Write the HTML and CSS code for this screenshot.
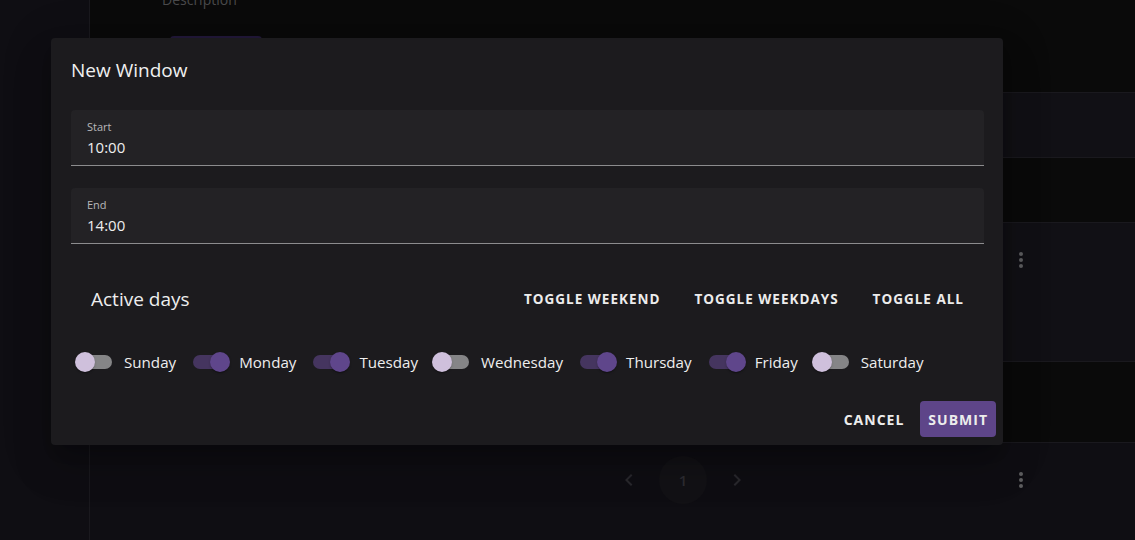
FILE: index.html
```html
<!DOCTYPE html>
<html lang="en">

<head>
    <meta charset="UTF-8">
    <meta name="viewport" content="width=device-width, initial-scale=1.0">
    <title>New Window</title>
    <link rel="stylesheet" href="styles.css">
</head>

<body>
    <div class="page">
        <div class="sidebar"></div>
        <div class="main">
            <div class="head">
                <div class="head-label">Description</div>
                <div class="head-btn"></div>
            </div>
            <div class="row row-light"></div>
            <div class="row row-dark"></div>
            <div class="row row-light row-tall">
                <div class="kebab"><i></i><i></i><i></i></div>
            </div>
            <div class="row row-dark row-mid"></div>
            <div class="row footer">
                <div class="pager">
                    <svg class="chev" viewBox="0 0 24 24"><path d="M15.41 7.41 14 6l-6 6 6 6 1.41-1.41L10.83 12z"/></svg>
                    <span class="page-num">1</span>
                    <svg class="chev" viewBox="0 0 24 24"><path d="M10 6 8.59 7.41 13.17 12l-4.58 4.59L10 18l6-6z"/></svg>
                </div>
                <div class="kebab"><i></i><i></i><i></i></div>
            </div>
        </div>
    </div>

    <div class="dialog">
        <div class="dialog-body">
            <h2 class="dialog-title">New Window</h2>

            <div class="field">
                <label class="field-label">Start</label>
                <div class="field-value">10:00</div>
            </div>
            <div class="field">
                <label class="field-label">End</label>
                <div class="field-value">14:00</div>
            </div>

            <div class="days-head">
                <span class="days-title">Active days</span>
                <div class="days-tools">
                    <button class="text-btn">Toggle weekend</button>
                    <button class="text-btn">Toggle weekdays</button>
                    <button class="text-btn">Toggle all</button>
                </div>
            </div>

            <div class="days">
                <label class="day"><span class="switch"><span class="track"></span><span class="thumb"></span></span>Sunday</label>
                <label class="day on"><span class="switch"><span class="track"></span><span class="thumb"></span></span>Monday</label>
                <label class="day on"><span class="switch"><span class="track"></span><span class="thumb"></span></span>Tuesday</label>
                <label class="day"><span class="switch"><span class="track"></span><span class="thumb"></span></span>Wednesday</label>
                <label class="day on"><span class="switch"><span class="track"></span><span class="thumb"></span></span>Thursday</label>
                <label class="day on"><span class="switch"><span class="track"></span><span class="thumb"></span></span>Friday</label>
                <label class="day"><span class="switch"><span class="track"></span><span class="thumb"></span></span>Saturday</label>
            </div>
        </div>
        <div class="dialog-actions">
            <button class="text-btn">Cancel</button>
            <button class="text-btn primary">Submit</button>
        </div>
    </div>
</body>

</html>
```

FILE: styles.css
```css
body {
    margin: 0;
    background-color: #0f0e13;
    font-family: 'Open Sans', 'Noto Sans', sans-serif;
    color: #ececec;
    overflow: hidden;
}

.page {
    display: flex;
    height: 540px;
}

.sidebar {
    width: 89px;
    border-right: 1px solid #1a191e;
    flex-shrink: 0;
}

.main {
    flex: 1;
    display: flex;
    flex-direction: column;
}

.head {
    height: 92px;
    background-color: #0a0a0a;
    padding-left: 72px;
    overflow: hidden;
}

.head-label {
    margin-top: -10px;
    font-size: 14px;
    line-height: 20px;
    color: #4a4a4c;
}

.head-btn {
    margin-top: 26px;
    margin-left: 8px;
    width: 92px;
    height: 36px;
    border-radius: 4px;
    background-color: #22193a;
}

.row {
    border-top: 1px solid #1a191e;
    height: 64px;
    display: flex;
    align-items: flex-start;
    justify-content: flex-end;
    padding-right: 112px;
}

.row-light {
    background-color: #111015;
}

.row-dark {
    background-color: #0a0a0a;
}

.row-tall {
    height: 138px;
}

.row-mid {
    height: 80px;
}

.row .kebab {
    margin-top: 29px;
}

.kebab {
    display: flex;
    flex-direction: column;
    gap: 2px;
}

.kebab i {
    width: 4px;
    height: 4px;
    border-radius: 50%;
    background-color: #5e5e60;
}

.footer {
    flex: 1;
    background-color: #0f0e13;
    justify-content: flex-start;
}

.footer .pager {
    margin-top: 13px;
    margin-left: 527px;
    display: flex;
    align-items: center;
    gap: 18px;
}

.footer .kebab {
    margin-left: auto;
}

.chev {
    width: 24px;
    height: 24px;
    fill: #2a292e;
}

.page-num {
    width: 48px;
    height: 48px;
    border-radius: 50%;
    background-color: #131216;
    color: #2e2d32;
    font-size: 15px;
    font-weight: 600;
    display: flex;
    align-items: center;
    justify-content: center;
}

/* dialog */

.dialog {
    position: absolute;
    left: 51px;
    top: 38px;
    width: 952px;
    background-color: #1c1b1e;
    border-radius: 4px;
    box-shadow: 0 11px 15px -7px rgba(0, 0, 0, 0.2), 0 24px 38px 3px rgba(0, 0, 0, 0.14), 0 9px 46px 8px rgba(0, 0, 0, 0.12);
}

.dialog-body {
    padding: 16px 19px 0 20px;
}

.dialog-title {
    margin: 0 0 24px;
    font-size: 19px;
    font-weight: 400;
    line-height: 32px;
    color: #f0f0f0;
}

.field {
    background-color: #232225;
    border-radius: 4px 4px 0 0;
    border-bottom: 1px solid #8c8c8e;
    padding: 9px 16px 5px;
    height: 41px;
    margin-bottom: 22px;
}

.field-label {
    display: block;
    font-size: 11px;
    line-height: 16px;
    color: #b8b8ba;
}

.field-value {
    font-size: 15px;
    line-height: 24px;
    color: #eeeeee;
}

.days-head {
    display: flex;
    align-items: center;
    justify-content: space-between;
    height: 40px;
    margin-top: 35px;
    padding: 0 20px;
}

.days-title {
    font-size: 19px;
    color: #eeeeee;
}

.days-tools {
    display: flex;
    gap: 34px;
}

.text-btn {
    background: none;
    border: none;
    padding: 0;
    font-family: inherit;
    font-size: 13.5px;
    font-weight: 700;
    letter-spacing: 1px;
    text-transform: uppercase;
    color: #ececec;
    cursor: pointer;
}

.days {
    display: flex;
    margin-top: 24px;
    margin-left: 6px;
}

.day {
    display: flex;
    align-items: center;
    margin: 0 16px 0 -11px;
    font-size: 15.15px;
    color: #eeeeee;
}

.switch {
    position: relative;
    width: 58px;
    height: 38px;
    flex-shrink: 0;
}

.track {
    position: absolute;
    left: 12px;
    top: 12px;
    width: 34px;
    height: 14px;
    border-radius: 7px;
    background-color: #858587;
}

.thumb {
    position: absolute;
    left: 9px;
    top: 9px;
    width: 20px;
    height: 20px;
    border-radius: 50%;
    background-color: #cfc0dc;
    box-shadow: 0 2px 1px -1px rgba(0, 0, 0, 0.2), 0 1px 1px 0 rgba(0, 0, 0, 0.14), 0 1px 3px 0 rgba(0, 0, 0, 0.12);
}

.day.on .track {
    background-color: #45355f;
}

.day.on .thumb {
    left: 29px;
    background-color: #5f468b;
}

.dialog-actions {
    display: flex;
    justify-content: flex-end;
    gap: 8px;
    padding: 20px 7px 8px;
}

.dialog-actions .text-btn {
    height: 36px;
    padding: 0 8px;
    border-radius: 4px;
    font-size: 14px;
}

.dialog-actions .primary {
    background-color: #5e4589;
}
```
